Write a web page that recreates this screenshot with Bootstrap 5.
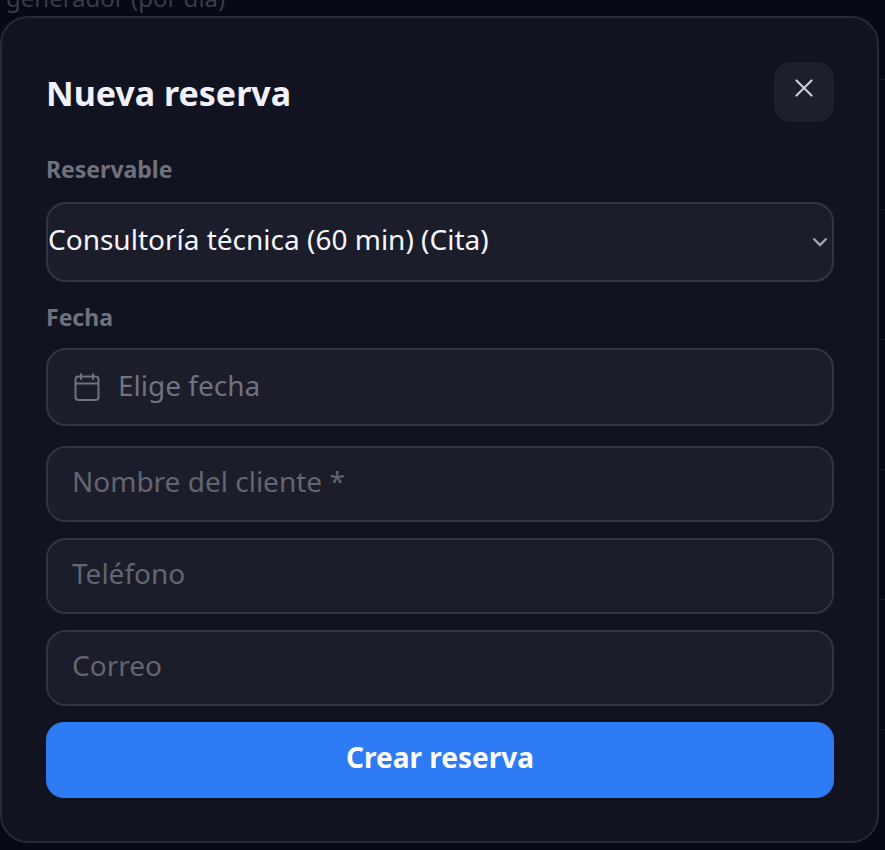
<!DOCTYPE html>
<html lang="es">
<head>
<meta charset="utf-8">
<title>Nueva reserva</title>
<link rel="stylesheet" href="https://cdn.jsdelivr.net/npm/bootstrap@5.3.0/dist/css/bootstrap.min.css">
<style>
html, body { height: 100%; }
body { background: #070914; font-family: "Noto Sans", sans-serif; overflow: hidden; position: relative; }
.back-text { color: #3a3c48; font-size: 24px; line-height: 28px; margin: -16px 0 0 6px; height: 96px; border-bottom: 1px solid #171924; }
.back-row { height: 130px; border-bottom: 1px solid #171924; }
.sheet { position: absolute; left: 0; top: 16px; width: 879px; height: 827px; background: #111420; border: 2px solid #272a37; border-radius: 28px; padding: 44px 43px 0 44px; }
.sheet-head { height: 62px; margin-bottom: 30px; }
.sheet-title { color: #f1f1fd; font-size: 34px; font-weight: 700; line-height: 46px; margin: 8px 0 0; }
.close-box { width: 60px; height: 60px; background: #1d1f2c; border: 0; border-radius: 16px; padding: 0 0 8px; color: #c9cad3; }
.field-label { color: #6f717d; font-size: 23px; font-weight: 700; line-height: 30px; margin-bottom: 18px; display: block; }
.field-label-tight { margin-bottom: 16px; }
.field-box.form-control, .field-box.form-select { background-color: #1b1d2b; border: 2px solid #333542; border-radius: 20px; font-size: 28px; box-shadow: none; }
.field-box.form-control { height: 76px; padding: 0 24px 7px; color: #fff; margin-bottom: 16px; }
.field-box.form-control::placeholder { color: #63656f; opacity: 1; }
.field-box.form-select { height: 80px; padding: 0 40px 6px 0; color: #f6f6fb; margin-bottom: 20px; background-image: url("data:image/svg+xml,%3csvg xmlns='http://www.w3.org/2000/svg' viewBox='0 0 16 10'%3e%3cpath fill='none' stroke='%23a3a4ae' stroke-width='2.400' d='M1.5 1.500 8 8l6.500-6.500'/%3e%3c/svg%3e"); background-position: right 4px center; background-size: 16px 10px; }
.date-box { height: 78px; background: #1b1d2b; border: 2px solid #333542; border-radius: 20px; padding: 0 26px; gap: 18px; color: #70727e; font-size: 28px; margin-bottom: 20px; }
.date-text { margin-bottom: 4px; }
.go-btn.btn { height: 76px; background: #2e7bf6; border: 0; border-radius: 18px; color: #fff; font-size: 28px; font-weight: 700; padding: 0 0 7px; }
</style>
</head>
<body>
<div class="back-text">generador (por día)</div>
<div class="back-row"></div>
<div class="back-row"></div>
<div class="back-row"></div>
<div class="back-row"></div>
<div class="back-row"></div>
<div class="modal-content sheet">
  <div class="d-flex justify-content-between align-items-start sheet-head">
    <h1 class="sheet-title">Nueva reserva</h1>
    <button type="button" class="close-box d-flex align-items-center justify-content-center" aria-label="Cerrar">
      <svg width="18" height="18" viewBox="0 0 18 18" fill="none" stroke="currentColor" stroke-width="2.200" stroke-linecap="round"><path d="M1.500 1.500 16.500 16.500M16.500 1.500 1.500 16.500"/></svg>
    </button>
  </div>
  <form class="d-flex flex-column">
    <label class="field-label" for="res">Reservable</label>
    <select id="res" class="form-select field-box">
      <option>Consultoría técnica (60 min) (Cita)</option>
    </select>
    <label class="field-label field-label-tight">Fecha</label>
    <div class="date-box d-flex align-items-center">
      <svg width="26" height="28" viewBox="0 0 26 28" fill="none" stroke="currentColor" stroke-width="2" stroke-linecap="round" stroke-linejoin="round"><rect x="1.500" y="3.500" width="23" height="23.500" rx="3"/><path d="M1.500 10.500h23M7 1v5M19 1v5"/></svg>
      <span class="date-text">Elige fecha</span>
    </div>
    <input class="form-control field-box" placeholder="Nombre del cliente *">
    <input class="form-control field-box" placeholder="Teléfono">
    <input class="form-control field-box" placeholder="Correo">
    <button type="button" class="btn go-btn w-100">Crear reserva</button>
  </form>
</div>
<script src="https://cdn.jsdelivr.net/npm/bootstrap@5.3.0/dist/js/bootstrap.bundle.min.js"></script>
</body>
</html>
